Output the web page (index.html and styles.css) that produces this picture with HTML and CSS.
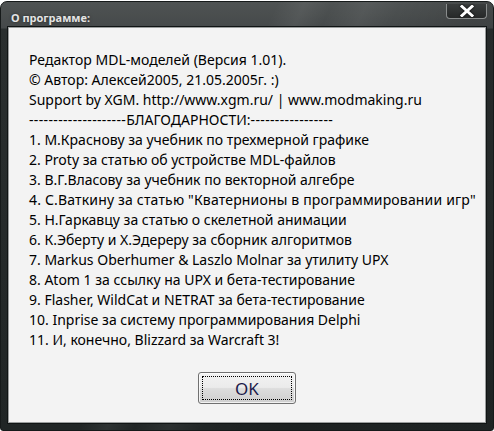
FILE: index.html
```html
<!DOCTYPE html>
<html lang="ru">
<head>
<meta charset="utf-8">
<title>О программе</title>
<link rel="stylesheet" href="styles.css">
</head>
<body>
<div class="window">
  <div class="titlebar">
    <span class="title">О программе:</span>
    <div class="close">
      <svg width="16" height="12" viewBox="0 0 16 12"><path d="M3 1.5 L13 10.5 M13 1.5 L3 10.5" stroke="#fff" stroke-width="3" stroke-linecap="square"/></svg>
    </div>
  </div>
  <div class="client">
    <div class="text">
      <div class="line">Редактор MDL-моделей (Версия 1.01).</div>
      <div class="line">© Автор: Алексей2005, 21.05.2005г. :)</div>
      <div class="line">Support by XGM. http://www.xgm.ru/ | www.modmaking.ru</div>
      <div class="line"><span class="dash">--------------------</span>БЛАГОДАРНОСТИ:<span class="dash">-----------------</span></div>
      <div class="line">1. М.Краснову за учебник по трехмерной графике</div>
      <div class="line">2. Proty за статью об устройстве MDL-файлов</div>
      <div class="line">3. В.Г.Власову за учебник по векторной алгебре</div>
      <div class="line wide">4. С.Ваткину за статью "Кватернионы в программировании игр"</div>
      <div class="line">5. Н.Гаркавцу за статью о скелетной анимации</div>
      <div class="line">6. К.Эберту и Х.Эдереру за сборник алгоритмов</div>
      <div class="line">7. Markus Oberhumer &amp; Laszlo Molnar за утилиту UPX</div>
      <div class="line">8. Atom 1 за ссылку на UPX и бета-тестирование</div>
      <div class="line">9. Flasher, WildCat и NETRAT за бета-тестирование</div>
      <div class="line">10. Inprise за систему программирования Delphi</div>
      <div class="line">11. И, конечно, Blizzard за Warcraft 3!</div>
    </div>
    <div class="actions">
      <button class="ok"><span class="focus">OK</span></button>
    </div>
  </div>
</div>
</body>
</html>
```
FILE: styles.css
```css
html, body {
  margin: 0;
  padding: 0;
  background: #ffffff;
}
body {
  width: 494px;
  height: 431px;
  overflow: hidden;
}
.window {
  box-sizing: border-box;
  width: 494px;
  height: 430px;
  margin-top: 1px;
  display: flex;
  flex-direction: column;
  border: 1px solid #161a1a;
  border-radius: 7px 7px 3px 3px;
  background:
    linear-gradient(115deg, rgba(255,255,255,0) 40%, rgba(255,255,255,0.06) 44%, rgba(255,255,255,0) 48%, rgba(255,255,255,0.05) 53%, rgba(255,255,255,0) 58%, rgba(0,0,0,0.12) 70%, rgba(0,0,0,0.05) 85%),
    linear-gradient(180deg, #4f5353 0px, #45494a 26px, #2a2f2f 27px, #202525 100%);
}
.titlebar {
  height: 25px;
  display: flex;
  align-items: flex-start;
  flex-shrink: 0;
}
.title {
  font-family: "Noto Sans", "Open Sans", sans-serif;
  font-weight: 700;
  font-size: 11px;
  line-height: 14px;
  color: #e4e4e4;
  margin: 9px 0 0 10px;
  text-shadow: 0 0 3px rgba(0,0,0,0.5);
}
.close {
  margin-left: auto;
  margin-right: 6px;
  margin-top: 2px;
  width: 41px;
  height: 15px;
  box-sizing: border-box;
  border: 1px solid #8a8d8d;
  border-top: none;
  border-radius: 0 0 4px 4px;
  background: linear-gradient(180deg, #3a3d3d, #262828);
  display: flex;
  align-items: center;
  justify-content: center;
}
.close svg {
  display: block;
  filter: drop-shadow(0 0 1px #000);
}
.client {
  flex: 1;
  margin: 0 7px 7px 7px;
  border: 1px solid #9a9d9d;
  background: #f3f3f3;
  display: flex;
  flex-direction: column;
  box-shadow: 0 0 0 1px #101414;
}
.text {
  padding: 22px 0 0 20px;
  font-family: "Noto Sans", "Open Sans", sans-serif;
  font-size: 14px;
  line-height: 20px;
  color: #000;
  white-space: nowrap;
}
.dash {
  letter-spacing: 0.35px;
}
.wide {
  letter-spacing: 0.17px;
}
.actions {
  display: flex;
  justify-content: center;
  margin-top: 22px;
}
.ok {
  width: 98px;
  height: 32px;
  box-sizing: border-box;
  padding: 3px;
  border: 1px solid #707070;
  border-radius: 3px;
  background: linear-gradient(180deg, #f2f2f2 0%, #ebebeb 48%, #dddddd 52%, #cfcfcf 100%);
  box-shadow: inset 0 0 0 1px rgba(255,255,255,0.7);
  font-family: "Noto Sans", "Open Sans", sans-serif;
  font-size: 17px;
  color: #1c1b4a;
  cursor: default;
}
.focus {
  display: flex;
  align-items: center;
  justify-content: center;
  height: 100%;
  border: 1px dotted #000;
  box-sizing: border-box;
}
```
